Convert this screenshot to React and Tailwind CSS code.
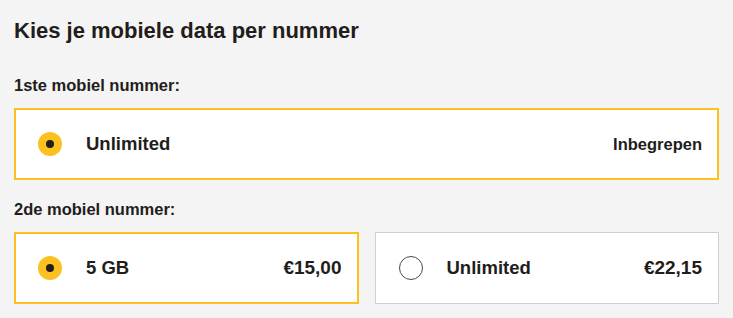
const font = { fontFamily: '"Liberation Sans", Arial, sans-serif' }

function Radio({ checked }) {
  if (checked) {
    return (
      <span className="flex h-6 w-6 shrink-0 items-center justify-center rounded-full bg-[#fcc021]">
        <span className="h-2 w-2 rounded-full bg-[#221d1a]" />
      </span>
    )
  }
  return <span className="h-6 w-6 shrink-0 rounded-full border border-[#4a4a4a] bg-white" />
}

function Option({ label, price, checked, small }) {
  return (
    <div
      className={`flex h-[72px] items-center bg-white ${
        checked ? 'border-2 border-[#fcc021] pl-[22px] pr-[15px]' : 'border border-[#cfcfcf] pl-[23px] pr-[16px]'
      }`}
    >
      <Radio checked={checked} />
      <span className="ml-6 text-[18.5px] font-bold text-[#221d1a]">{label}</span>
      <span className={`ml-auto font-bold text-[#221d1a] ${small ? 'text-[16.5px]' : 'text-[19px]'}`}>
        {price}
      </span>
    </div>
  )
}

export default function App() {
  return (
    <div className="min-h-[318px] w-full bg-[#f4f4f4] px-[14px] pt-[17px] pb-4" style={font}>
      <h2 className="text-[22px] leading-7 font-bold text-[#221d1a]">Kies je mobiele data per nummer</h2>

      <div className="mt-7 text-[16.5px] leading-6 font-bold text-[#221d1a]">1ste mobiel nummer:</div>
      <div className="mt-[11px]">
        <Option label="Unlimited" price="Inbegrepen" checked small />
      </div>

      <div className="mt-[17px] text-[16.5px] leading-6 font-bold text-[#221d1a]">2de mobiel nummer:</div>
      <div className="mt-[11px] grid grid-cols-2 gap-4">
        <Option label="5 GB" price="€15,00" checked />
        <Option label="Unlimited" price="€22,15" />
      </div>
    </div>
  )
}
